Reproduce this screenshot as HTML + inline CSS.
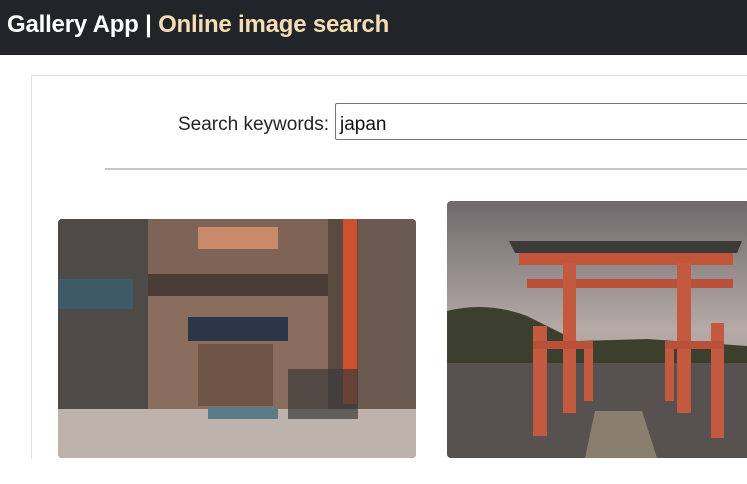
<!DOCTYPE html>
<html><head><style>
html,body{margin:0;width:747px;height:484px;overflow:hidden;background:#fff;font-family:"Liberation Sans",sans-serif;}
.nav{height:55px;background:#212529;}
.nav h1{margin:0;position:absolute;left:7px;top:11px;font-size:24px;font-weight:600;color:#fff;letter-spacing:-0.2px}
.nav span{color:#f5deb3}
.card{position:absolute;left:31px;top:75px;width:760px;height:383px;border:1px solid #dfdfdf;border-bottom:none}
.lbl{position:absolute;left:178px;top:114px;font-size:19px;color:#212529}
.inp{position:absolute;left:335px;top:103px;width:420px;height:37px;border:1px solid #767676;border-radius:2px;font-size:19px;color:#111;box-sizing:border-box;padding:10px 4px 0}
.hr{position:absolute;left:105px;top:168px;width:660px;height:2px;background:#c8c8c8}
svg{position:absolute}
</style></head><body>
<div class="nav"><h1>Gallery App | <span>Online image search</span></h1></div>
<div class="card"></div>
<div class="lbl">Search keywords:</div>
<div class="inp">japan</div>
<div class="hr"></div>
<svg style="left:58px;top:219px" width="358" height="239" viewBox="0 0 358 239">
<defs><clipPath id="c1"><rect width="358" height="239" rx="4"/></clipPath></defs>
<g clip-path="url(#c1)">
<rect width="358" height="239" fill="#5a4a40"/>
<rect x="0" y="0" width="90" height="200" fill="#4d4a48"/>
<rect x="90" y="0" width="180" height="55" fill="#7d6456"/>
<rect x="140" y="8" width="80" height="22" fill="#c98a6a"/>
<rect x="90" y="55" width="180" height="22" fill="#4a3c36"/>
<rect x="90" y="77" width="180" height="130" fill="#8a6d5c"/>
<rect x="130" y="98" width="100" height="24" fill="#2b3648"/>
<rect x="140" y="125" width="75" height="62" fill="#6e5548"/>
<rect x="285" y="0" width="14" height="185" fill="#d0502e"/>
<rect x="300" y="0" width="58" height="200" fill="#6a5a50"/>
<rect x="0" y="60" width="75" height="30" fill="#3d5a66"/>
<rect x="0" y="190" width="358" height="49" fill="#bdb3ac"/>
<rect x="150" y="188" width="70" height="12" fill="#5a7a86"/>
<rect x="230" y="150" width="70" height="50" fill="#3a3a3a" opacity=".7"/>
</g></svg>
<svg style="left:447px;top:201px" width="300" height="257" viewBox="0 0 300 257">
<defs><clipPath id="c2"><rect width="320" height="257" rx="4"/></clipPath>
<linearGradient id="sky" x1="0" y1="0" x2="0" y2="1"><stop offset="0" stop-color="#6e6a6c"/><stop offset=".5" stop-color="#b5aaa6"/><stop offset="1" stop-color="#8c8888"/></linearGradient></defs>
<g clip-path="url(#c2)">
<rect width="300" height="257" fill="url(#sky)"/>
<path d="M0 110 Q40 100 80 115 L130 140 L200 138 L300 145 L300 165 L0 165Z" fill="#3c3f2e"/>
<rect y="162" width="300" height="95" fill="#57524f"/>
<path d="M62 40 L295 40 L290 52 L68 52Z" fill="#3a3a38"/>
<rect x="72" y="52" width="214" height="12" fill="#c2543a"/>
<rect x="80" y="78" width="206" height="9" fill="#b8503a"/>
<rect x="116" y="62" width="13" height="150" fill="#c35a40"/>
<rect x="230" y="62" width="14" height="150" fill="#c35a40"/>
<rect x="86" y="125" width="14" height="110" fill="#c35a40"/>
<rect x="137" y="140" width="9" height="60" fill="#c35a40"/>
<rect x="264" y="122" width="13" height="115" fill="#c35a40"/>
<rect x="218" y="140" width="9" height="60" fill="#c35a40"/>
<rect x="86" y="140" width="60" height="8" fill="#b8503a"/>
<rect x="218" y="140" width="59" height="8" fill="#b8503a"/>
<path d="M148 210 L195 210 L210 257 L138 257Z" fill="#8a7e6e"/>
</g></svg>
</body></html>
